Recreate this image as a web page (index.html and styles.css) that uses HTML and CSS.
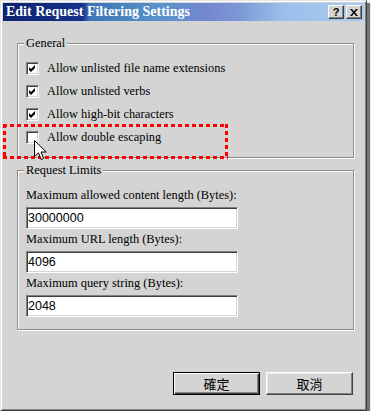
FILE: index.html
```html
<!DOCTYPE html>
<html lang="en">
<head>
  <meta charset="UTF-8" />
  <title>Edit Request Filtering Settings</title>
  <link rel="stylesheet" href="styles.css">
</head>
<body>
  <div class="window">
    <div class="titlebar">
      <span class="title">Edit Request Filtering Settings</span>
      <div class="title-buttons">
        <span class="tbtn help">?</span>
        <span class="tbtn close">
          <svg width="8" height="7" viewBox="0 0 8 7"><path d="M0 0h2l2 2.5L6 0h2L5 3.5 8 7H6L4 4.5 2 7H0l3-3.5z" fill="#000"/></svg>
        </span>
      </div>
    </div>

    <div class="content">
      <fieldset class="group general">
        <legend>General</legend>
        <label class="check-row"><span class="checkbox"><svg width="7" height="7" viewBox="0 0 7 7"><path d="M0 2l2 2 4-4v3L2 7 0 5z" fill="#000"/></svg></span>Allow unlisted file name extensions</label>
        <label class="check-row"><span class="checkbox"><svg width="7" height="7" viewBox="0 0 7 7"><path d="M0 2l2 2 4-4v3L2 7 0 5z" fill="#000"/></svg></span>Allow unlisted verbs</label>
        <label class="check-row"><span class="checkbox"><svg width="7" height="7" viewBox="0 0 7 7"><path d="M0 2l2 2 4-4v3L2 7 0 5z" fill="#000"/></svg></span>Allow high-bit characters</label>
        <label class="check-row"><span class="checkbox"></span>Allow double escaping</label>
      </fieldset>

      <fieldset class="group limits">
        <legend>Request Limits</legend>
        <div class="field">
          <label>Maximum allowed content length (Bytes):</label>
          <div class="textbox">30000000</div>
        </div>
        <div class="field">
          <label>Maximum URL length (Bytes):</label>
          <div class="textbox">4096</div>
        </div>
        <div class="field">
          <label>Maximum query string (Bytes):</label>
          <div class="textbox">2048</div>
        </div>
      </fieldset>

      <div class="actions">
        <button class="btn default">確定</button>
        <button class="btn">取消</button>
      </div>
    </div>

    <div class="highlight"></div>
    <svg class="cursor" width="13" height="21" viewBox="0 0 13 21">
      <path d="M0.5 0.5V16.5L4.5 12.8L7.2 19.5L9.6 18.5L7 12H12.3Z" fill="#fff" stroke="#000" stroke-width="1" stroke-linejoin="miter"/>
    </svg>
  </div>
</body>
</html>
```

FILE: styles.css
```css
body {
  margin: 0;
  background-color: #ffffff;
  font-family: 'Liberation Serif', 'Times New Roman', serif;
  color: #000;
}

.window {
  position: relative;
  box-sizing: border-box;
  width: 367px;
  height: 411px;
  padding: 2px;
  background-color: #d4d4d4;
  border: 1px solid;
  border-color: #e4e4e4 #404040 #404040 #e4e4e4;
  box-shadow: inset 1px 1px 0 #ffffff, inset -1px -1px 0 #808080, 3px 3px 1px rgba(0, 0, 0, 0.55);
}

/* title bar */
.titlebar {
  height: 18px;
  display: flex;
  align-items: center;
  justify-content: space-between;
  padding: 0 2px 0 3px;
  background: linear-gradient(90deg, #0c2470 0%, #16308a 22%, #3a76b6 24%, #5b93c9 44%, #7486d0 56%, #7d9ad6 66%, #9cc0ec 78%, #a8cbf2 100%);
}

.title {
  color: #ffffff;
  font-weight: bold;
  font-size: 14px;
  line-height: 18px;
  white-space: nowrap;
}

.title-buttons {
  display: flex;
  gap: 2px;
}

.tbtn {
  box-sizing: border-box;
  width: 16px;
  height: 14px;
  display: flex;
  align-items: center;
  justify-content: center;
  background-color: #d4d4d4;
  border: 1px solid;
  border-color: #ffffff #404040 #404040 #ffffff;
  box-shadow: inset -1px -1px 0 #808080;
}

.tbtn.help {
  font-family: 'Liberation Sans', Arial, sans-serif;
  font-weight: bold;
  font-size: 11px;
  line-height: 12px;
}

/* body */
.content {
  padding: 15px 10px 0 14px;
  font-size: 12.4px;
}

.group {
  margin: 0;
  border: 1px solid #8a8a8a;
  box-shadow: inset 1px 1px 0 #ffffff, 1px 1px 0 #ffffff;
}

.group legend {
  padding: 0 2px;
  margin-left: -2px;
  line-height: 14px;
  background-color: #d4d4d4;
}

.general {
  padding: 7px 8px 8px;
}

.limits {
  margin-top: 5px;
  padding: 11px 8px 12px;
}

.check-row {
  display: flex;
  align-items: center;
  height: 23px;
  gap: 8px;
  white-space: nowrap;
}

.checkbox {
  box-sizing: border-box;
  width: 13px;
  height: 13px;
  display: flex;
  align-items: center;
  justify-content: center;
  background-color: #ffffff;
  border: 1px solid;
  border-color: #808080 #ffffff #ffffff #808080;
  box-shadow: inset 1px 1px 0 #404040, inset -1px -1px 0 #d4d4d4;
}

.field label {
  display: block;
  line-height: 15px;
  white-space: nowrap;
}

.textbox {
  box-sizing: border-box;
  width: 212px;
  height: 22px;
  margin: 4px 0 3px;
  padding: 2px 1px;
  background-color: #ffffff;
  border: 1px solid;
  border-color: #808080 #ffffff #ffffff #808080;
  box-shadow: inset 1px 1px 0 #404040, inset -1px -1px 0 #d4d4d4;
  font-family: 'Liberation Sans', Arial, sans-serif;
  font-size: 12.5px;
  line-height: 16px;
}

.field:last-child .textbox {
  margin-bottom: 0;
}

/* buttons */
.actions {
  display: flex;
  justify-content: flex-end;
  gap: 6px;
  margin-top: 42px;
  padding-right: 1px;
}

.btn {
  box-sizing: border-box;
  width: 87px;
  height: 23px;
  padding: 0;
  background-color: #d4d4d4;
  border: 1px solid;
  border-color: #ffffff #404040 #404040 #ffffff;
  box-shadow: inset -1px -1px 0 #808080, inset 1px 1px 0 #e8e8e8;
  font-family: 'Noto Sans CJK TC', sans-serif;
  font-size: 13px;
  color: #000;
}

.btn.default {
  border-color: #000;
  box-shadow: inset 1px 1px 0 #ffffff, inset -1px -1px 0 #404040, inset -2px -2px 0 #808080;
}

/* overlays */
.highlight {
  position: absolute;
  left: 2px;
  top: 123px;
  width: 225px;
  height: 35px;
  background:
    repeating-linear-gradient(90deg, #ff0000 0 4px, transparent 4px 7px) top left / 100% 3px no-repeat,
    repeating-linear-gradient(90deg, #ff0000 0 4px, transparent 4px 7px) bottom left / 100% 3px no-repeat,
    repeating-linear-gradient(180deg, #ff0000 0 4px, transparent 4px 7px) top left / 3px 100% no-repeat,
    repeating-linear-gradient(180deg, #ff0000 0 4px, transparent 4px 7px) top right / 3px 100% no-repeat;
}

.cursor {
  position: absolute;
  left: 33px;
  top: 139px;
}
```
